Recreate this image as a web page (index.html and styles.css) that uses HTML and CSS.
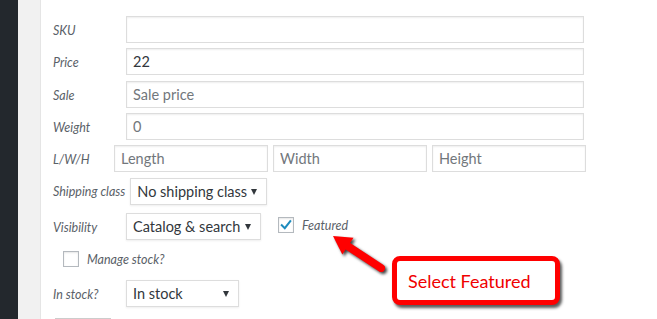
FILE: index.html
```html
<!DOCTYPE html>
<html lang="en">
<head>
<meta charset="utf-8">
<title>Product data</title>
<link rel="stylesheet" href="styles.css">
</head>
<body>
<div class="page">
  <div class="adminmenu"></div>
  <div class="gutter"></div>
  <div class="panel">
    <div class="field">
      <label class="field-label">SKU</label>
      <input class="text-input" type="text" value="">
    </div>
    <div class="field">
      <label class="field-label">Price</label>
      <input class="text-input" type="text" value="22">
    </div>
    <div class="field">
      <label class="field-label">Sale</label>
      <input class="text-input" type="text" placeholder="Sale price">
    </div>
    <div class="field">
      <label class="field-label">Weight</label>
      <input class="text-input" type="text" placeholder="0">
    </div>
    <div class="field">
      <label class="field-label field-label-short">L/W/H</label>
      <div class="dims">
        <input class="text-input dim-input" type="text" placeholder="Length">
        <input class="text-input dim-input" type="text" placeholder="Width">
        <input class="text-input dim-input" type="text" placeholder="Height">
      </div>
    </div>
    <div class="field field-shipping">
      <label class="field-label field-label-auto">Shipping class</label>
      <div class="select select-shipping"><span>No shipping class</span><span class="caret"></span></div>
    </div>
    <div class="field field-visibility">
      <label class="field-label">Visibility</label>
      <div class="select select-visibility"><span>Catalog &amp; search</span><span class="caret"></span></div>
      <span class="checkbox checkbox-featured checked">
        <svg viewBox="0 0 16 16" width="16" height="16"><path d="M3.2 8.3 L6.6 11.6 L12.9 3.6" fill="none" stroke="#1e8cbe" stroke-width="2.3" stroke-linecap="square"/></svg>
      </span>
      <span class="check-label">Featured</span>
    </div>
    <div class="field field-manage">
      <span class="checkbox"></span>
      <span class="check-label">Manage stock?</span>
    </div>
    <div class="field field-stock">
      <label class="field-label">In stock?</label>
      <div class="select select-stock"><span>In stock</span><span class="caret"></span></div>
    </div>
    <div class="button-stub"></div>
  </div>
</div>

<svg class="arrow" width="80" height="60" viewBox="320 225 80 60">
  <g class="arrow-shape">
    <line x1="346" y1="245" x2="381" y2="268" stroke="#ff0000" stroke-width="8" stroke-linecap="round"/>
    <polygon points="333,236 353.5,237.8 342.3,254.4" fill="#ff0000"/>
  </g>
</svg>
<div class="callout">Select Featured</div>
</body>
</html>
```
FILE: styles.css
```css
html, body {
  margin: 0;
  padding: 0;
}
body {
  width: 657px;
  height: 319px;
  overflow: hidden;
  font-family: "Lato", "Open Sans", sans-serif;
  background: #ffffff;
}
.page {
  display: flex;
  height: 319px;
}
.adminmenu {
  width: 18px;
  flex-shrink: 0;
  background: #23282d;
}
.gutter {
  width: 23px;
  flex-shrink: 0;
  background: #f1f1f1;
  border-right: 1px solid #e5e5e5;
  box-sizing: border-box;
}
.panel {
  flex: 1;
  background: #ffffff;
  padding: 16px 0 0 12px;
  display: flex;
  flex-direction: column;
}
.field {
  display: flex;
  align-items: center;
  margin-bottom: 5.25px;
}
.field-label {
  width: 73px;
  flex-shrink: 0;
  font-style: italic;
  font-size: 12.5px;
  color: #5a6168;
  padding-top: 2px;
}
.field-label-short {
  width: 61px;
}
.field-label-auto {
  width: auto;
  margin-right: 5px;
  padding-top: 0;
  padding-bottom: 1px;
}
.text-input {
  width: 458px;
  height: 27px;
  box-sizing: border-box;
  margin: 0;
  border: 1px solid #dddddd;
  box-shadow: inset 0 1px 2px rgba(0, 0, 0, 0.07);
  padding: 0 6px;
  font-family: "Lato", "Open Sans", sans-serif;
  font-size: 14.5px;
  color: #32373c;
  background: #ffffff;
  outline: none;
  border-radius: 0;
}
.text-input::placeholder {
  color: #72777c;
}
.dims {
  display: flex;
  gap: 5px;
}
.dim-input {
  width: 154px;
}
.field-shipping {
  margin-top: 0.75px;
  margin-bottom: 8px;
}
.select {
  height: 27px;
  box-sizing: border-box;
  border: 1px solid #dddddd;
  box-shadow: 0 1px 2px rgba(0, 0, 0, 0.07);
  padding: 0 9px 0 6px;
  display: flex;
  align-items: center;
  justify-content: space-between;
  font-size: 14.5px;
  color: #32373c;
  background: #ffffff;
}
.select-shipping { width: 137px; }
.select-visibility { width: 135px; }
.select-stock { width: 113px; }
.caret {
  width: 0;
  height: 0;
  border-left: 3.5px solid transparent;
  border-right: 3.5px solid transparent;
  border-top: 6px solid #32373c;
  margin-top: 1px;
}
.checkbox {
  width: 16px;
  height: 16px;
  box-sizing: border-box;
  border: 1px solid #b4b9be;
  background: #ffffff;
  box-shadow: inset 0 1px 2px rgba(0, 0, 0, 0.1);
  display: flex;
  align-items: center;
  justify-content: center;
  flex-shrink: 0;
}
.checkbox svg {
  display: block;
}
.checkbox-featured {
  margin-left: 17px;
  margin-top: -4px;
}
.check-label {
  margin-left: 8px;
  font-style: italic;
  font-size: 12.5px;
  color: #5a6168;
}
.field-visibility .check-label {
  margin-top: -3px;
}
.field-manage {
  margin-top: 6px;
  margin-bottom: 13px;
  padding-left: 10px;
}
.field-stock {
  margin-bottom: 11px;
}
.button-stub {
  width: 56px;
  height: 28px;
  margin-left: 2px;
  border: 1px solid #cccccc;
  box-sizing: border-box;
  background: #f7f7f7;
}
.arrow {
  position: absolute;
  left: 320px;
  top: 225px;
  overflow: visible;
}
.arrow-shape {
  filter: drop-shadow(2px 2px 1.5px rgba(0, 0, 0, 0.75));
}
.callout {
  position: absolute;
  left: 392px;
  top: 256px;
  width: 168px;
  height: 49px;
  box-sizing: border-box;
  border: 5px solid #ff0000;
  border-radius: 8px;
  background: #ffffff;
  box-shadow: 2px 3px 3px rgba(0, 0, 0, 0.65);
  color: #f00000;
  font-family: "Lato", "Open Sans", sans-serif;
  font-size: 18px;
  padding-left: 11px;
  display: flex;
  align-items: center;
}
```
